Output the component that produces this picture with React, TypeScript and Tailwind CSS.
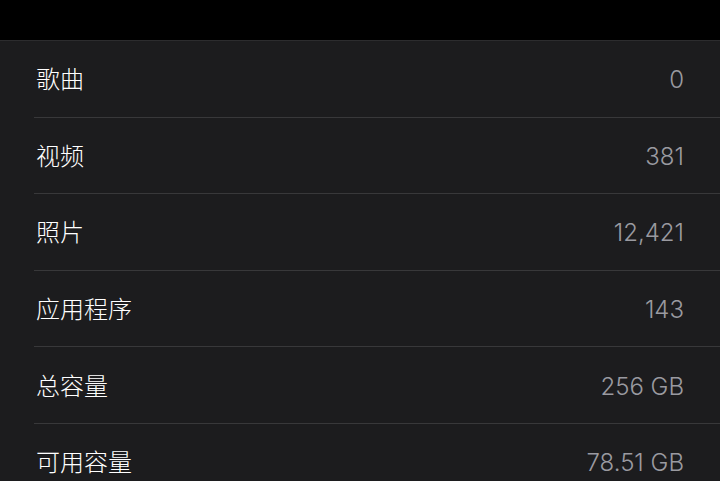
import React from 'react';

const rows = [
  { label: '歌曲', value: '0' },
  { label: '视频', value: '381' },
  { label: '照片', value: '12,421' },
  { label: '应用程序', value: '143' },
  { label: '总容量', value: '256 GB' },
  { label: '可用容量', value: '78.51 GB' },
];

const App = () => {
  return (
    <div
      className="w-[720px] h-[481px] overflow-hidden bg-[#1c1c1e]"
      style={{ fontFamily: '"Inter", "Noto Sans CJK SC", sans-serif' }}
    >
      <div className="h-[41px] bg-black border-b border-[#2c2c2e]" />
      <div className="pl-[34px]">
        {rows.map((row) => (
          <div
            key={row.label}
            className="h-[76.6px] pt-[3px] flex items-center justify-between pr-[36px] border-b border-[#38383a]"
          >
            <span className="pl-[2px] text-[24px] font-light text-white">{row.label}</span>
            <span className="text-[24px] font-light text-[#9a9aa0]">{row.value}</span>
          </div>
        ))}
      </div>
    </div>
  );
};

export default App;
